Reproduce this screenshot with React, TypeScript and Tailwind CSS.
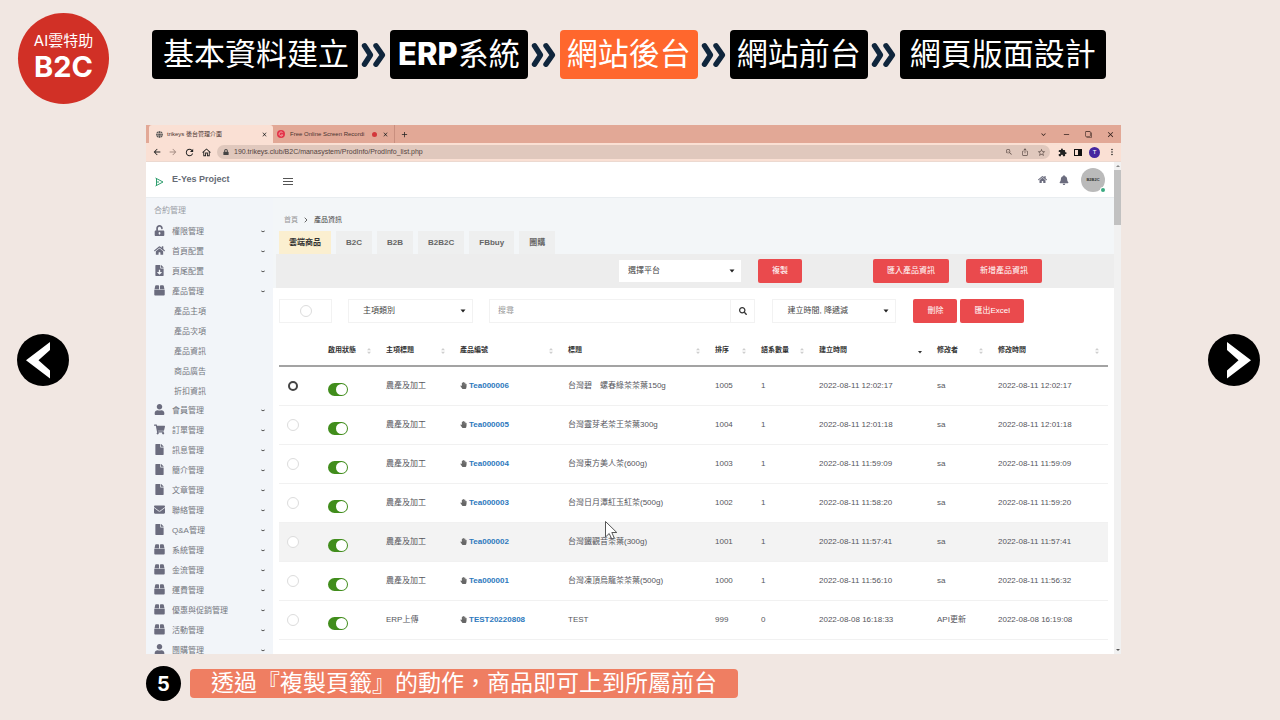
import React, { useState } from 'react';
import {
  FaBell,
  FaEnvelope,
  FaFile,
  FaFileDownload,
  FaGlobe,
  FaHandPaper,
  FaHome,
  FaLock,
  FaSearch,
  FaShoppingCart,
  FaUnlockAlt,
  FaUser,
} from 'react-icons/fa';
import {
  MdArrowBack,
  MdArrowForward,
  MdClose,
  MdExtension,
  MdFilterNone,
  MdIosShare,
  MdKeyboardArrowDown,
  MdMoreVert,
  MdOutlineHome,
  MdRefresh,
  MdRemove,
  MdStarBorder,
  MdZoomOut,
  MdAdd,
} from 'react-icons/md';

function BoxIcon({ className }: { className?: string }) {
  return (
    <svg viewBox="0 0 12 12" className={className} fill="currentColor" aria-hidden="true">
      <path d="M2.200.3h2.400c.5 0 .9.4.9.9v3.400H.6l.7-3.500c.1-.5.4-.8.9-.8zM7.400.3h2.400c.5 0 .8.3.9.8l.7 3.500H6.500V1.200c0-.5.400-.9.900-.9zM.3 5.300h11.400v5c0 .7-.5 1.200-1.200 1.200h-9c-.7 0-1.200-.5-1.200-1.200z" />
    </svg>
  );
}

const steps = [
  { text: '基本資料建立', pad: 'pl-[11px] pr-[9px]' },
  { text: '系統', latin: 'ERP', pad: 'px-2' },
  { text: '網站後台', pad: 'px-[7px]', active: true },
  { text: '網站前台', pad: 'px-[7px]' },
  { text: '網頁版面設計', pad: 'px-[10px]' },
];

const menu = [
  { label: '權限管理', icon: FaUnlockAlt },
  { label: '首頁配置', icon: FaHome },
  { label: '頁尾配置', icon: FaFileDownload },
  {
    label: '產品管理',
    icon: BoxIcon,
    children: ['產品主項', '產品次項', '產品資訊', '商品廣告', '折扣資訊'],
  },
  { label: '會員管理', icon: FaUser },
  { label: '訂單管理', icon: FaShoppingCart },
  { label: '訊息管理', icon: FaFile },
  { label: '簡介管理', icon: FaFile },
  { label: '文章管理', icon: FaFile },
  { label: '聯絡管理', icon: FaEnvelope },
  { label: 'Q&A管理', icon: FaFile },
  { label: '系統管理', icon: BoxIcon },
  { label: '金流管理', icon: BoxIcon },
  { label: '運費管理', icon: BoxIcon },
  { label: '優惠與促銷管理', icon: BoxIcon },
  { label: '活動管理', icon: BoxIcon },
  { label: '團購管理', icon: FaUser },
];

const tabs = ['雲端商品', 'B2C', 'B2B', 'B2B2C', 'FBbuy', '團購'];

const columns = [
  { label: '啟用狀態', width: 'w-[58px]' },
  { label: '主項標題', width: 'w-[74px]' },
  { label: '產品編號', width: 'w-[108px]' },
  { label: '標題', width: 'w-[147px]' },
  { label: '排序', width: 'w-[46px]' },
  { label: '語系數量', width: 'w-[58px]' },
  { label: '建立時間', width: 'w-[118px]', sorted: true },
  { label: '修改者', width: 'w-[61px]' },
  { label: '修改時間', width: 'w-[116px]' },
];

const products = [
  { category: '農產及加工', code: 'Tea000006', title: '台灣碧　螺春綠茶茶葉150g', sort: 1005, langs: 1, created: '2022-08-11 12:02:17', editor: 'sa', updated: '2022-08-11 12:02:17' },
  { category: '農產及加工', code: 'Tea000005', title: '台灣靈芽老茶王茶葉300g', sort: 1004, langs: 1, created: '2022-08-11 12:01:18', editor: 'sa', updated: '2022-08-11 12:01:18' },
  { category: '農產及加工', code: 'Tea000004', title: '台灣東方美人茶(600g)', sort: 1003, langs: 1, created: '2022-08-11 11:59:09', editor: 'sa', updated: '2022-08-11 11:59:09' },
  { category: '農產及加工', code: 'Tea000003', title: '台灣日月潭紅玉紅茶(500g)', sort: 1002, langs: 1, created: '2022-08-11 11:58:20', editor: 'sa', updated: '2022-08-11 11:59:20' },
  { category: '農產及加工', code: 'Tea000002', title: '台灣鐵觀音茶葉(300g)', sort: 1001, langs: 1, created: '2022-08-11 11:57:41', editor: 'sa', updated: '2022-08-11 11:57:41' },
  { category: '農產及加工', code: 'Tea000001', title: '台灣凍頂烏龍茶茶葉(500g)', sort: 1000, langs: 1, created: '2022-08-11 11:56:10', editor: 'sa', updated: '2022-08-11 11:56:32' },
  { category: 'ERP上傳', code: 'TEST20220808', title: 'TEST', sort: 999, langs: 0, created: '2022-08-08 16:18:33', editor: 'API更新', updated: '2022-08-08 16:19:08' },
];

const HOVERED = 'Tea000002';

function StepArrow() {
  return (
    <svg viewBox="0 0 32 28" className="h-7 w-8 shrink-0" fill="none" stroke="#10263c" strokeWidth="5.400" strokeLinecap="round" strokeLinejoin="round" aria-hidden="true">
      <path d="M6.500 4.800L12.500 14L6.500 23.200M18 4.800L24.500 14L18 23.200" />
    </svg>
  );
}

function RoundArrow({ direction }: { direction: 'left' | 'right' }) {
  return (
    <button type="button" aria-label={direction === 'left' ? '上一頁' : '下一頁'} className="size-[52px] shrink-0 rounded-full bg-black">
      <svg viewBox="0 0 52 52" className="size-full" fill="#fff" aria-hidden="true">
        {direction === 'left' ? (
          <path d="M33 8V16L21.500 26.300L33 36.500V44.500L9 26.300z" />
        ) : (
          <path d="M19 8V16L30.500 26.300L19 36.500V44.500L43 26.300z" />
        )}
      </svg>
    </button>
  );
}

function SortIcon({ sorted }: { sorted?: boolean }) {
  if (sorted) {
    return (
      <svg viewBox="0 0 6 8" className="h-2 w-[6px]" fill="#333" aria-hidden="true">
        <path d="M1 4h4L3 6.500z" />
      </svg>
    );
  }
  return (
    <svg viewBox="0 0 6 8" className="h-2 w-[6px]" fill="#cfcfcf" aria-hidden="true">
      <path d="M1 3.300h4L3 1zM1 4.700h4L3 7z" />
    </svg>
  );
}

function Dropdown({ label, className }: { label: string; className: string }) {
  return (
    <div className={`relative shrink-0 ${className}`}>
      <select aria-label={label} className="block h-full w-full appearance-none bg-transparent text-[8px] leading-[12px] text-[#444] outline-none">
        <option>{label}</option>
      </select>
      <svg viewBox="0 0 6 4" className="absolute top-1/2 right-[6px] h-1 w-[6px] -translate-y-1/2" fill="#222" aria-hidden="true">
        <path d="M.5.5h5L3 3.500z" />
      </svg>
    </div>
  );
}

function ActionButton({ children }: { children: React.ReactNode }) {
  return (
    <button type="button" className="h-6 shrink-0 rounded-[2px] bg-[#ea4a4d] px-[14px] text-[8px] text-white">
      {children}
    </button>
  );
}

function BrowserChrome() {
  return (
    <div className="shrink-0">
      <div className="flex h-[18px] items-stretch bg-[#e2a896] pl-[3px] text-[6px] text-[#4a3430]">
        <div className="flex w-[124px] items-center rounded-t-[3px] bg-[#fae0d4] pr-[5px] pl-[7px]">
          <FaGlobe className="size-[7px] text-[#555]" />
          <span className="ml-1 flex-1 whitespace-nowrap">trikeys 後台管理介面</span>
          <button type="button" aria-label="關閉分頁"><MdClose className="size-[7px] text-[#222]" /></button>
        </div>
        <div className="flex w-[122px] items-center border-r border-[#c98f7f] pr-[5px] pl-1">
          <svg viewBox="0 0 8 8" className="size-2 shrink-0" aria-hidden="true">
            <circle cx="4" cy="4" r="4" fill="#e3344a" />
            <path d="M5.500 2.500a2 2 0 1 0 .3 2.500H4" fill="none" stroke="#f7b9ae" strokeWidth=".8" />
          </svg>
          <span className="ml-[5px] flex-1 whitespace-nowrap">Free Online Screen Recordi</span>
          <span className="size-[5px] shrink-0 rounded-full bg-[#d3373a]" />
          <button type="button" aria-label="關閉分頁" className="ml-[5px]"><MdClose className="size-[7px] text-[#222]" /></button>
        </div>
        <button type="button" aria-label="新增分頁" className="ml-[5px]"><MdAdd className="size-[9px] text-[#222]" /></button>
        <div className="ml-auto flex items-center gap-[14px] pr-[6px] text-[#33211d]">
          <MdKeyboardArrowDown className="size-[9px]" />
          <MdRemove className="size-[9px]" />
          <MdFilterNone className="size-[7px] -scale-x-100" />
          <MdClose className="size-[9px]" />
        </div>
      </div>
      <div className="flex h-[19px] items-center border-b border-[#ecd9d0] bg-[#fae0d4] pr-1 pl-[6px] text-[#222]">
        <div className="flex items-center gap-[6px]">
          <MdArrowBack className="size-[10px]" />
          <MdArrowForward className="size-[10px] text-[#a58d84]" />
          <MdRefresh className="size-[11px]" />
          <MdOutlineHome className="size-[11px]" />
        </div>
        <div className="ml-[5px] flex h-[14px] flex-1 items-center rounded-full bg-[#e0c8bd] pr-1 pl-[6px]">
          <FaLock className="size-[6px] text-[#444]" />
          <input
            aria-label="網址"
            readOnly
            value="190.trikeys.club/B2C/manasystem/ProdInfo/ProdInfo_list.php"
            className="ml-[5px] min-w-0 flex-1 bg-transparent text-[7px] text-[#54443f] outline-none"
          />
          <div className="flex items-center gap-2 text-[#5b4b46]">
            <MdZoomOut className="size-2" />
            <MdIosShare className="size-2" />
            <MdStarBorder className="size-[9px]" />
          </div>
        </div>
        <div className="ml-2 flex items-center gap-[7px]">
          <MdExtension className="size-[9px]" />
          <span className="flex h-[7px] w-2 justify-end border border-[#111]"><span className="w-[3px] bg-[#111]" /></span>
          <span className="flex size-[11px] items-center justify-center rounded-full bg-[#4527a0] text-[6px] text-white">T</span>
          <MdMoreVert className="size-[10px]" />
        </div>
      </div>
    </div>
  );
}

function Sidebar() {
  return (
    <aside className="w-[127px] shrink-0 overflow-hidden bg-[#f2f5f9] pt-[3px] text-[8px] text-[#74777f]">
      <h2 className="h-[21px] pl-2 leading-[20px] text-[#9a9da6]">合約管理</h2>
      <ul>
        {menu.map(({ label, icon: Icon, children }) => (
          <li key={label}>
            <a href="#" className="flex h-5 items-center pr-2 pl-2">
              <Icon className="mb-[3px] size-[11px] text-[#6b6c7e]" />
              <span className="ml-[7px] flex-1">{label}</span>
              <svg viewBox="0 0 4 3" className="mb-px h-[3px] w-1" fill="none" stroke="#555" aria-hidden="true">
                <path d="M.3 1L2 1.800L3.700 1" />
              </svg>
            </a>
            {children && (
              <ul className="h-[99px] pl-7">
                {children.map((child) => (
                  <li key={child} className="h-5 leading-[20px]">
                    <a href="#">{child}</a>
                  </li>
                ))}
              </ul>
            )}
          </li>
        ))}
      </ul>
    </aside>
  );
}

function ProductTable() {
  const [disabled, setDisabled] = useState<string[]>([]);

  const toggle = (code: string) => {
    setDisabled((prev) => (prev.includes(code) ? prev.filter((c) => c !== code) : [...prev, code]));
  };

  return (
    <table className="w-full table-fixed text-left text-[8px] text-[#55565c]">
      <thead>
        <tr className="h-[30px] border-b-2 border-[#a3a3a3] text-[7px] text-[#333]">
          <th className="w-[43px]" />
          {columns.map((col) => (
            <th key={col.label} className={`pr-2 pl-[6px] font-bold ${col.width}`}>
              <div className="flex items-center justify-between whitespace-nowrap">
                {col.label}
                <SortIcon sorted={col.sorted} />
              </div>
            </th>
          ))}
        </tr>
      </thead>
      <tbody>
        {products.map((p, i) => (
          <tr key={p.code} className={`h-[39px] border-b border-[#f1f1f1] whitespace-nowrap ${p.code === HOVERED ? 'bg-[#f3f3f3]' : ''}`}>
            <td className="pl-2">
              <input
                type="checkbox"
                aria-label={`選取 ${p.code}`}
                className={`block appearance-none rounded-full bg-white ${i === 0 ? 'ml-px size-[10px] border-2 border-[#444]' : 'size-3 border border-[#dcdcdc]'}`}
              />
            </td>
            <td className="pt-2 pl-[6px]">
              <input
                type="checkbox"
                role="switch"
                aria-label={`啟用 ${p.code}`}
                checked={!disabled.includes(p.code)}
                onChange={() => toggle(p.code)}
                className="flex h-[13px] w-5 appearance-none justify-start rounded-full bg-[#999] p-px before:size-[11px] before:rounded-full before:bg-white checked:justify-end checked:bg-[#418d1c]"
              />
            </td>
            <td className="pl-[6px]">{p.category}</td>
            <td className="pl-[6px]">
              <a href="#" className="flex items-center gap-[2px] font-bold text-[#2d79bd]">
                <FaHandPaper className="size-[7px] text-[#666]" />
                {p.code}
              </a>
            </td>
            <td className="pl-[6px]">
              <div className="relative">
                {p.title}
                {p.code === HOVERED && (
                  <svg viewBox="0 0 14 20" className="absolute -top-4 left-9 h-5 w-[14px]" fill="#fff" stroke="#555" aria-hidden="true">
                    <path d="M1.500 1.500V17L5.200 13.500L7.800 19L10.200 17.800L7.800 12.500H12.800z" />
                  </svg>
                )}
              </div>
            </td>
            <td className="pl-[6px]">{p.sort}</td>
            <td className="pl-[6px]">{p.langs}</td>
            <td className="pl-[6px]">{p.created}</td>
            <td className="pl-[6px]">{p.editor}</td>
            <td className="pl-[6px]">{p.updated}</td>
          </tr>
        ))}
      </tbody>
    </table>
  );
}

function ProductPage() {
  const [activeTab, setActiveTab] = useState('雲端商品');

  return (
    <main className="min-w-0 flex-1 bg-white">
      <div className="bg-[#f3f6f8] pl-[5px]">
        <nav className="flex items-center gap-[6px] pt-[17px] pb-[6px] pl-[6px] text-[7px] leading-[10px]">
          <a href="#" className="text-[#999]">首頁</a>
          <svg viewBox="0 0 4 6" className="h-[6px] w-1" fill="none" stroke="#666" aria-hidden="true">
            <path d="M.7.7L3 3L.7 5.300" />
          </svg>
          <span className="text-[#444]">產品資訊</span>
        </nav>
        <div className="flex gap-[5px] pl-px">
          {tabs.map((tab) => (
            <button
              key={tab}
              type="button"
              onClick={() => setActiveTab(tab)}
              className={`h-[23px] px-[10px] text-[8px] font-bold ${tab === activeTab ? 'bg-[#fbefd0] text-[#333]' : 'bg-[#eeefef] text-[#666]'}`}
            >
              {tab}
            </button>
          ))}
        </div>
      </div>
      <div className="flex h-[34px] items-center justify-end border-l-[3px] border-[#f3f6f8] bg-[#ededed] pr-[72px]">
        <Dropdown label="選擇平台" className="h-[22px] w-[122px] bg-white pl-[9px]" />
        <div className="ml-[17px] flex"><ActionButton>複製</ActionButton></div>
        <div className="ml-[71px] flex gap-[17px]">
          <ActionButton>匯入產品資訊</ActionButton>
          <ActionButton>新增產品資訊</ActionButton>
        </div>
      </div>
      <div className="flex items-center pt-[11px] pr-[90px] pb-[13px] pl-[6px]">
        <label className="flex h-6 w-[53px] shrink-0 items-center justify-center border border-[#f2f2f2]">
          <input type="checkbox" aria-label="全選" className="size-3 appearance-none rounded-full border border-[#dcdcdc]" />
        </label>
        <Dropdown label="主項類別" className="ml-4 h-6 w-[125px] border border-[#f2f2f2] pl-[14px]" />
        <div className="ml-4 flex h-6 min-w-0 flex-1 border border-[#f2f2f2]">
          <input aria-label="搜尋" placeholder="搜尋" className="min-w-0 flex-1 px-2 text-[8px] placeholder-[#999] outline-none" />
          <button type="button" aria-label="搜尋" className="flex w-6 items-center justify-center border-l border-[#f2f2f2]">
            <FaSearch className="size-2 text-[#333]" />
          </button>
        </div>
        <Dropdown label="建立時間, 降遞減" className="mr-[17px] ml-[17px] h-6 w-[124px] border border-[#f2f2f2] pl-[14px]" />
        <div className="flex gap-[3px]">
          <ActionButton>刪除</ActionButton>
          <ActionButton>匯出Excel</ActionButton>
        </div>
      </div>
      <div className="px-[6px]">
        <ProductTable />
      </div>
    </main>
  );
}

function BrowserWindow() {
  return (
    <section className="flex min-w-0 flex-1 flex-col overflow-hidden bg-white font-['Liberation_Sans','Noto_Sans_CJK_TC',sans-serif]">
      <BrowserChrome />
      <div className="flex min-h-0 flex-1">
        <div className="flex min-w-0 flex-1 flex-col">
          <header className="flex h-9 shrink-0 items-center border-b border-[#e9edf0] pr-[9px] pl-2">
            <svg viewBox="0 0 10 10" className="mt-1 size-[10px]" fill="none" stroke="#2f9e6e" aria-hidden="true">
              <path d="M1.500 1L9 5L1.500 9M2.500 2v6M2.500 5H5" />
            </svg>
            <span className="ml-2 w-[111px] text-[9px] font-bold text-[#666b75]">E-Yes Project</span>
            <button type="button" aria-label="選單" className="flex w-[10px] flex-col gap-[2px] pt-1">
              <span className="h-px bg-[#555]" />
              <span className="h-px bg-[#555]" />
              <span className="h-px bg-[#555]" />
            </button>
            <div className="ml-auto flex items-center text-[#6b6c7e]">
              <FaHome className="size-[9px]" />
              <FaBell className="ml-3 size-[10px]" />
              <div className="relative ml-3 flex size-6 items-center justify-center rounded-full bg-[#bababa] text-[4px] font-bold text-[#333]">
                B2B2C
                <span className="absolute right-0 bottom-0 size-1 rounded-full bg-[#3aa981] ring-1 ring-white" />
              </div>
            </div>
          </header>
          <div className="flex min-h-0 flex-1 overflow-hidden">
            <Sidebar />
            <ProductPage />
          </div>
        </div>
        <div className="flex w-[7px] shrink-0 flex-col items-center justify-between bg-[#f1f1f1]">
          <div className="flex w-full flex-col items-center">
            <svg viewBox="0 0 4 8" className="h-2 w-1" fill="#888" aria-hidden="true"><path d="M0 5h4L2 3z" /></svg>
            <div className="h-[55px] w-full bg-[#c1c1c1]" />
          </div>
          <svg viewBox="0 0 4 8" className="h-2 w-1" fill="#555" aria-hidden="true"><path d="M0 3h4L2 5z" /></svg>
        </div>
      </div>
    </section>
  );
}

export default function App() {
  return (
    <div className="flex h-screen flex-col overflow-hidden bg-[#f1e7e2] font-['Inter','Noto_Sans_CJK_TC',sans-serif]">
      <header className="flex shrink-0 items-start pt-[13px] pb-[21px] pl-[18px]">
        <a href="#" className="flex size-[91px] shrink-0 flex-col items-center justify-center rounded-full bg-[#d13026] pb-1 text-white">
          <span className="text-[15px] leading-[20px]">AI雲特助</span>
          <span className="text-[29px] leading-[32px] font-bold">B2C</span>
        </a>
        <nav className="mt-[17px] ml-[43px] flex items-center">
          {steps.map((step, i) => (
            <React.Fragment key={step.text}>
              {i > 0 && <StepArrow />}
              <a href="#" className={`flex h-[49px] items-center rounded-[4px] text-[31px] whitespace-nowrap text-white ${step.pad} ${step.active ? 'bg-[#ff672d]' : 'bg-black'}`}>
                {step.latin && <span className="font-extrabold">{step.latin}</span>}
                {step.text}
              </a>
            </React.Fragment>
          ))}
        </nav>
      </header>
      <div className="flex min-h-0 flex-1 pr-5 pl-[17px]">
        <div className="flex w-[129px] shrink-0 items-center pb-[60px]">
          <RoundArrow direction="left" />
        </div>
        <BrowserWindow />
        <div className="flex w-[139px] shrink-0 items-center justify-end pb-[60px]">
          <RoundArrow direction="right" />
        </div>
      </div>
      <footer className="flex shrink-0 items-center gap-[9px] pt-3 pb-[19px] pl-[146px]">
        <span className="flex size-[35px] items-center justify-center rounded-full bg-black text-[20px] font-bold text-white">5</span>
        <p className="rounded-[4px] bg-[#ef7e62] px-[21px] text-[23px] leading-[29px] text-white">透過『複製頁籤』的動作，商品即可上到所屬前台</p>
      </footer>
    </div>
  );
}
